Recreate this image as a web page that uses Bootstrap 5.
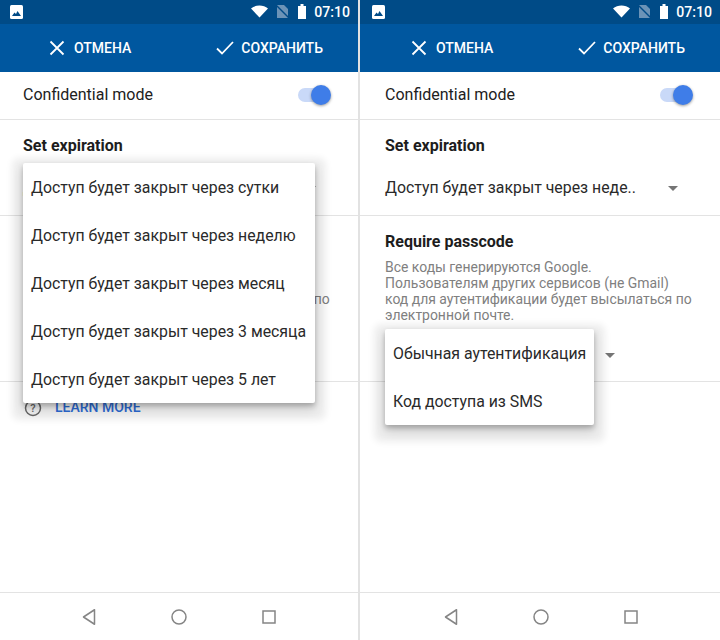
<!DOCTYPE html>
<html>
<head>
    <meta charset="UTF-8">
    <title>Confidential mode</title>
    <link href="https://cdn.jsdelivr.net/npm/bootstrap@5.3.3/dist/css/bootstrap.min.css" rel="stylesheet">
    <style>
        html, body { width: 720px; height: 640px; overflow: hidden; }
        body { font-family: Roboto, "Liberation Sans", sans-serif; background: #fff; color: #212121; }
        .screens { width: 720px; height: 640px; gap: 2px; background: #e2e2e2; }
        .phone { --inset: 0px; width: 358px; height: 640px; background: #fff; position: relative; overflow: hidden; }
        .phone-right { --inset: 2px; width: 360px; }
        .status-strip { height: 24px; background: #004b87; color: #fff; font-size: 14.1px; font-weight: 500; padding: 2px 8px 0 calc(10px + var(--inset)); }
        .status-strip > svg { margin-top: -3px; }
        .status-icons svg { margin-top: -3px; }
        .action-strip { height: 48px; background: #00579f; color: #fff; font-size: 14px; font-weight: 500; }
        .action-cancel { gap: 9px; }
        .action-save { gap: 7px; margin-left: 85px; margin-right: 35px; }
        .mode-row { height: 48px; padding: 0 28px 2px calc(23px + var(--inset)); border-bottom: 1px solid #e3e3e3; font-size: 16px; }
        .switch-track { width: 32px; height: 14px; border-radius: 7px; background: #c9d9f8; position: relative; }
        .switch-thumb { width: 20px; height: 20px; border-radius: 50%; background: #3f7de8; position: absolute; right: -1px; top: -3px; box-shadow: 0 1px 3px rgba(0,0,0,.4); }
        .block-section { padding: 0 23px 0 calc(23px + var(--inset)); border-bottom: 1px solid #e3e3e3; }
        .block-title { font-size: 16px; font-weight: 700; color: #1d1d1d; line-height: 20px; margin: 0; }
        .expire-block { height: 96px; padding-top: 16px; }
        .select-line { font-size: 15.85px; height: 24px; margin-top: 20px; color: #2a2a2a; white-space: nowrap; }
        .caret-down { width: 0; height: 0; border-left: 5.500px solid transparent; border-right: 5.500px solid transparent; border-top: 5.500px solid #757575; }
        .expire-caret { margin-left: 32px; }
        .passcode-block { height: 166px; padding-top: 16px; }
        .hint-text { font-size: 13.95px; line-height: 16px; color: #808080; margin: 7px 0 0; white-space: nowrap; }
        .pass-line { font-size: 15.85px; margin-top: 20px; height: 24px; gap: 27px; }
        .learn-row { padding: 15px 0 0 calc(24px + var(--inset)); gap: 13px; font-size: 14px; font-weight: 500; color: #2f6fdc; }
        .nav-strip { height: 48px; position: absolute; left: 0; right: 0; bottom: 0; border-top: 1px solid #e3e3e3; background: #fff; padding: 1px 0 0 var(--inset); }
        .nav-icons { gap: 72px; }
        .popup-menu { position: absolute; background: #fff; border-radius: 2px; font-size: 15.85px; color: #2a2a2a; box-shadow: 0 3px 5px rgba(0,0,0,.22), 0 6px 12px rgba(0,0,0,.14), 0 6px 7px 11px rgba(0,0,0,.07); }
        .popup-menu > div { height: 48px; padding: 2px 8px 0; display: flex; align-items: center; white-space: nowrap; }
        .popup-left { left: 23px; top: 163px; width: 292px; }
        .popup-right { left: 25px; top: 329px; width: 209px; }
    </style>
</head>
<body>
<div class="screens d-flex">

    <!-- left phone: expiration menu open -->
    <div class="phone">
        <div class="status-strip d-flex align-items-center">
            <svg width="13" height="14" viewBox="0 0 13 14"><rect width="13" height="14" rx="1.500" fill="#fff"/><path d="M2 11 4.500 7.500 6 9l1.500-3 3.500 5z" fill="#004b87"/></svg>
            <div class="status-icons ms-auto d-flex align-items-center">
                <svg width="17" height="14" viewBox="0 0 17 14"><path d="M0 4.500C4.500 .5 12.500 .5 17 4.500L8.500 13.500z" fill="#fff"/></svg>
                <svg class="ms-2" width="13" height="15" viewBox="0 0 13 15"><path d="M1 1h7l4 4v9H1z" fill="#6c93b7"/><path d="M0 1l13 13" stroke="#004b87" stroke-width="1.500"/></svg>
                <svg style="margin-left:9px" width="8" height="15" viewBox="0 0 8 15"><path d="M2.500 0h3v2H8v13H0V2h2.500z" fill="#fff"/></svg>
                <span class="ms-2">07:10</span>
            </div>
        </div>
        <div class="action-strip d-flex align-items-center">
            <div class="action-cancel d-flex align-items-center ms-auto">
                <svg width="16" height="16" viewBox="0 0 16 16"><path d="M1.500 1.500l13 13M14.500 1.500l-13 13" stroke="#fff" stroke-width="1.800"/></svg>
                <span>ОТМЕНА</span>
            </div>
            <div class="action-save d-flex align-items-center">
                <svg width="18" height="14" viewBox="0 0 18 14"><path d="M1 7.500l5 5L17 1" fill="none" stroke="#fff" stroke-width="1.800"/></svg>
                <span>СОХРАНИТЬ</span>
            </div>
        </div>
        <div class="mode-row d-flex align-items-center justify-content-between">
            <span>Confidential mode</span>
            <span class="switch-track"><span class="switch-thumb"></span></span>
        </div>
        <div class="block-section expire-block">
            <p class="block-title">Set expiration</p>
            <div class="select-line d-flex align-items-center">
                <span>Доступ будет закрыт через неде..</span><span class="caret-down expire-caret"></span>
            </div>
        </div>
        <div class="block-section passcode-block">
            <p class="block-title">Require passcode</p>
            <p class="hint-text">Все коды генерируются Google.<br>Пользователям других сервисов (не Gmail)<br>код для аутентификации будет высылаться по<br>электронной почте.</p>
            <div class="pass-line d-flex align-items-center"><span>Обычная аутентификация</span><span class="caret-down"></span></div>
        </div>
        <div class="learn-row d-flex align-items-center">
            <svg width="18" height="18" viewBox="0 0 18 18"><circle cx="9" cy="9" r="7.500" fill="none" stroke="#6b6b6b" stroke-width="1.500"/><text x="9" y="13" text-anchor="middle" font-size="11" font-weight="500" fill="#6b6b6b">?</text></svg>
            <span>LEARN MORE</span>
        </div>
        <div class="nav-strip d-flex justify-content-center">
            <div class="nav-icons d-flex align-items-center">
                <svg width="18" height="18" viewBox="0 0 18 18"><path d="M14.500 1.750v14.500L3.500 9z" fill="none" stroke="#858585" stroke-width="1.500" stroke-linejoin="round"/></svg>
                <svg width="18" height="18" viewBox="0 0 18 18"><circle cx="9" cy="9" r="7" fill="none" stroke="#858585" stroke-width="1.500"/></svg>
                <svg width="18" height="18" viewBox="0 0 18 18"><rect x="3" y="3" width="12" height="12" fill="none" stroke="#858585" stroke-width="1.500"/></svg>
            </div>
        </div>
        <div class="popup-menu popup-left">
            <div>Доступ будет закрыт через сутки</div>
            <div>Доступ будет закрыт через неделю</div>
            <div>Доступ будет закрыт через месяц</div>
            <div>Доступ будет закрыт через 3 месяца</div>
            <div>Доступ будет закрыт через 5 лет</div>
        </div>
    </div>

    <!-- right phone: passcode menu open -->
    <div class="phone phone-right">
        <div class="status-strip d-flex align-items-center">
            <svg width="13" height="14" viewBox="0 0 13 14"><rect width="13" height="14" rx="1.500" fill="#fff"/><path d="M2 11 4.500 7.500 6 9l1.500-3 3.500 5z" fill="#004b87"/></svg>
            <div class="status-icons ms-auto d-flex align-items-center">
                <svg width="17" height="14" viewBox="0 0 17 14"><path d="M0 4.500C4.500 .5 12.500 .5 17 4.500L8.500 13.500z" fill="#fff"/></svg>
                <svg class="ms-2" width="13" height="15" viewBox="0 0 13 15"><path d="M1 1h7l4 4v9H1z" fill="#6c93b7"/><path d="M0 1l13 13" stroke="#004b87" stroke-width="1.500"/></svg>
                <svg style="margin-left:9px" width="8" height="15" viewBox="0 0 8 15"><path d="M2.500 0h3v2H8v13H0V2h2.500z" fill="#fff"/></svg>
                <span class="ms-2">07:10</span>
            </div>
        </div>
        <div class="action-strip d-flex align-items-center">
            <div class="action-cancel d-flex align-items-center ms-auto">
                <svg width="16" height="16" viewBox="0 0 16 16"><path d="M1.500 1.500l13 13M14.500 1.500l-13 13" stroke="#fff" stroke-width="1.800"/></svg>
                <span>ОТМЕНА</span>
            </div>
            <div class="action-save d-flex align-items-center">
                <svg width="18" height="14" viewBox="0 0 18 14"><path d="M1 7.500l5 5L17 1" fill="none" stroke="#fff" stroke-width="1.800"/></svg>
                <span>СОХРАНИТЬ</span>
            </div>
        </div>
        <div class="mode-row d-flex align-items-center justify-content-between">
            <span>Confidential mode</span>
            <span class="switch-track"><span class="switch-thumb"></span></span>
        </div>
        <div class="block-section expire-block">
            <p class="block-title">Set expiration</p>
            <div class="select-line d-flex align-items-center">
                <span>Доступ будет закрыт через неде..</span><span class="caret-down expire-caret"></span>
            </div>
        </div>
        <div class="block-section passcode-block">
            <p class="block-title">Require passcode</p>
            <p class="hint-text">Все коды генерируются Google.<br>Пользователям других сервисов (не Gmail)<br>код для аутентификации будет высылаться по<br>электронной почте.</p>
            <div class="pass-line d-flex align-items-center"><span>Обычная аутентификация</span><span class="caret-down"></span></div>
        </div>
        <div class="learn-row d-flex align-items-center">
            <svg width="18" height="18" viewBox="0 0 18 18"><circle cx="9" cy="9" r="7.500" fill="none" stroke="#6b6b6b" stroke-width="1.500"/><text x="9" y="13" text-anchor="middle" font-size="11" font-weight="500" fill="#6b6b6b">?</text></svg>
            <span>LEARN MORE</span>
        </div>
        <div class="nav-strip d-flex justify-content-center">
            <div class="nav-icons d-flex align-items-center">
                <svg width="18" height="18" viewBox="0 0 18 18"><path d="M14.500 1.750v14.500L3.500 9z" fill="none" stroke="#858585" stroke-width="1.500" stroke-linejoin="round"/></svg>
                <svg width="18" height="18" viewBox="0 0 18 18"><circle cx="9" cy="9" r="7" fill="none" stroke="#858585" stroke-width="1.500"/></svg>
                <svg width="18" height="18" viewBox="0 0 18 18"><rect x="3" y="3" width="12" height="12" fill="none" stroke="#858585" stroke-width="1.500"/></svg>
            </div>
        </div>
        <div class="popup-menu popup-right">
            <div>Обычная аутентификация</div>
            <div>Код доступа из SMS</div>
        </div>
    </div>
</div>
<script src="https://cdn.jsdelivr.net/npm/bootstrap@5.3.3/dist/js/bootstrap.bundle.min.js"></script>
</body>
</html>
